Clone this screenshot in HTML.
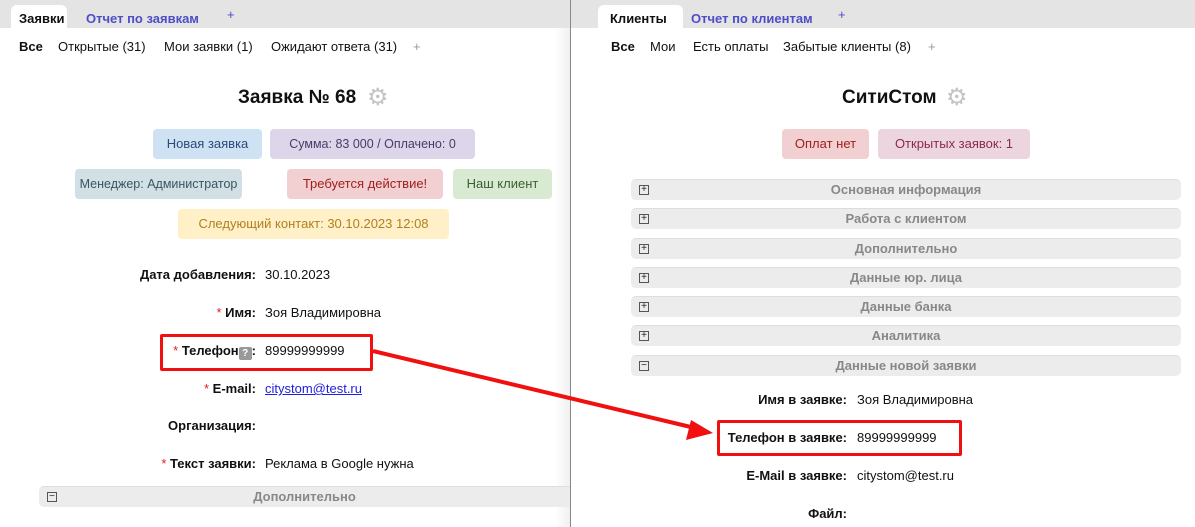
<!DOCTYPE html>
<html><head><meta charset="utf-8"><style>
*{margin:0;padding:0;box-sizing:border-box}
body{width:1195px;height:527px;overflow:hidden;background:#fff;font-family:"Liberation Sans","DejaVu Sans",sans-serif;font-size:13px;color:#111;position:relative}
.a{position:absolute;white-space:nowrap}
.bar{position:absolute;top:0;height:28px;background:#e4e4e4}
.tab{position:absolute;top:5px;height:23px;background:#fff;border-radius:6px 6px 0 0;font-weight:bold;padding:6px 8px 0}
.lnk{color:#4d4dc8;font-weight:bold}
.b{position:absolute;height:30px;line-height:30px;border-radius:4px;text-align:center;font-size:13px;white-space:nowrap;overflow:hidden}
.t{position:absolute;font-size:19px;font-weight:bold}
.lbl{position:absolute;font-weight:bold;text-align:right;white-space:nowrap}
.r{color:#e02020;font-weight:normal}
.acc{position:absolute;left:631px;width:550px;height:21px;background:#ececec;border-radius:5px;border-top:1px solid #ddd;text-align:center;font-weight:bold;color:#888;line-height:20px}
.pm{position:absolute;left:8px;top:5px;width:10px;height:10px;border:1px solid #555;font-size:10px;line-height:8px;color:#222;font-weight:normal;text-align:center}
.box{position:absolute;border:3px solid #f01010;border-radius:2px}
.g{position:absolute;font-size:24px;color:#c4c4c4;line-height:24px}
</style></head><body>
<div class="bar" style="left:0;width:570px"></div>
<div class="bar" style="left:571px;width:624px"></div>
<div style="position:absolute;left:570px;top:0;width:1px;height:527px;background:#888"></div>
<div style="position:absolute;left:555px;top:28px;width:15px;height:499px;background:linear-gradient(to right,#fff,#f0f0f0)"></div>

<div class="tab" style="left:11px;width:56px">Заявки</div>
<div class="a lnk" style="left:86px;top:11px">Отчет по заявкам</div>
<div class="a" style="left:227px;top:7px;color:#4d4dc8">+</div>
<div class="a" style="left:19px;top:39px;font-weight:bold">Все</div>
<div class="a" style="left:58px;top:39px">Открытые (31)</div>
<div class="a" style="left:164px;top:39px">Мои заявки (1)</div>
<div class="a" style="left:271px;top:39px">Ожидают ответа (31)</div>
<div class="a" style="left:413px;top:39px;color:#999">+</div>

<div class="a t" style="left:238px;top:87px">Заявка № 68</div>
<div class="g" style="left:367px;top:86px">⚙</div>
<div class="b" style="left:153px;top:129px;width:109px;background:#cfe2f3;color:#2c4a7a">Новая заявка</div>
<div class="b" style="left:270px;top:129px;width:205px;background:#ddd5ea;color:#4a3a6a;font-size:12.5px">Сумма: 83 000 / Оплачено: 0</div>
<div class="b" style="left:75px;top:169px;width:167px;background:#d1e0e5;color:#3a5560;font-size:12.5px">Менеджер: Администратор</div>
<div class="b" style="left:287px;top:169px;width:156px;background:#f2cfd0;color:#a02020">Требуется действие!</div>
<div class="b" style="left:453px;top:169px;width:99px;background:#d9ead3;color:#3a6030">Наш клиент</div>
<div class="b" style="left:178px;top:209px;width:271px;background:#fff0c8;color:#b08020">Следующий контакт: 30.10.2023 12:08</div>

<div class="lbl" style="right:939px;top:267px">Дата добавления:</div><div class="a" style="left:265px;top:267px">30.10.2023</div>
<div class="lbl" style="right:939px;top:305px"><span class="r">*</span> Имя:</div><div class="a" style="left:265px;top:305px">Зоя Владимировна</div>
<div class="lbl" style="right:939px;top:343px"><span class="r">*</span> Телефон<span style="display:inline-block;width:13px;height:13px;background:#999;color:#fff;border-radius:2px;font-size:10px;text-align:center;line-height:13px;vertical-align:-1px">?</span>:</div><div class="a" style="left:265px;top:343px">89999999999</div>
<div class="box" style="left:160px;top:334px;width:213px;height:37px"></div>
<div class="lbl" style="right:939px;top:381px"><span class="r">*</span> E-mail:</div><div class="a" style="left:265px;top:381px;color:#2020e0;text-decoration:underline">citystom@test.ru</div>
<div class="lbl" style="right:939px;top:418px">Организация:</div>
<div class="lbl" style="right:939px;top:456px"><span class="r">*</span> Текст заявки:</div><div class="a" style="left:265px;top:456px">Реклама в Google нужна</div>
<div class="acc" style="left:39px;width:531px;top:486px;border-radius:5px 0 0 5px">Дополнительно<div class="pm">−</div></div>

<div class="tab" style="left:598px;width:85px;padding-left:12px">Клиенты</div>
<div class="a lnk" style="left:691px;top:11px">Отчет по клиентам</div>
<div class="a" style="left:838px;top:7px;color:#4d4dc8">+</div>
<div class="a" style="left:611px;top:39px;font-weight:bold">Все</div>
<div class="a" style="left:650px;top:39px">Мои</div>
<div class="a" style="left:693px;top:39px">Есть оплаты</div>
<div class="a" style="left:783px;top:39px">Забытые клиенты (8)</div>
<div class="a" style="left:928px;top:39px;color:#999">+</div>
<div class="a t" style="left:842px;top:87px">СитиСтом</div>
<div class="g" style="left:946px;top:86px">⚙</div>
<div class="b" style="left:782px;top:129px;width:87px;background:#f2cfd0;color:#a02020">Оплат нет</div>
<div class="b" style="left:878px;top:129px;width:152px;background:#ecd5df;color:#8a2a4a">Открытых заявок: 1</div>

<div class="acc" style="top:179px">Основная информация<div class="pm">+</div></div>
<div class="acc" style="top:208px">Работа с клиентом<div class="pm">+</div></div>
<div class="acc" style="top:238px">Дополнительно<div class="pm">+</div></div>
<div class="acc" style="top:267px">Данные юр. лица<div class="pm">+</div></div>
<div class="acc" style="top:296px">Данные банка<div class="pm">+</div></div>
<div class="acc" style="top:325px">Аналитика<div class="pm">+</div></div>
<div class="acc" style="top:355px">Данные новой заявки<div class="pm">−</div></div>

<div class="lbl" style="right:348px;top:392px">Имя в заявке:</div><div class="a" style="left:857px;top:392px">Зоя Владимировна</div>
<div class="lbl" style="right:348px;top:430px">Телефон в заявке:</div><div class="a" style="left:857px;top:430px">89999999999</div>
<div class="box" style="left:717px;top:420px;width:245px;height:36px"></div>
<div class="lbl" style="right:348px;top:468px">E-Mail в заявке:</div><div class="a" style="left:857px;top:468px">citystom@test.ru</div>
<div class="lbl" style="right:348px;top:506px">Файл:</div>

<svg style="position:absolute;left:0;top:0" width="1195" height="527">
<line x1="373" y1="351" x2="695" y2="428" stroke="#f01010" stroke-width="4"/>
<polygon points="713,433 686,440 691,420" fill="#f01010"/>
</svg>
</body></html>
